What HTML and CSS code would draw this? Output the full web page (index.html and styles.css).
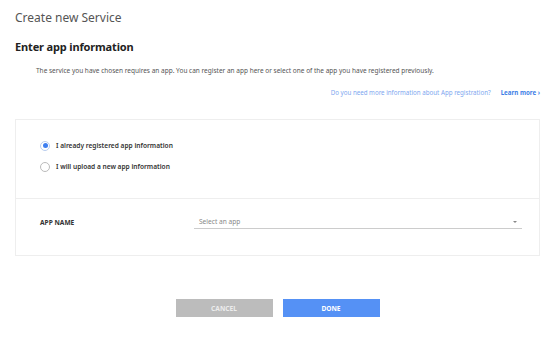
FILE: index.html
```html
<!DOCTYPE html>
<html lang="en">

<head>
    <meta charset="UTF-8">
    <title>Create new Service</title>
    <link rel="stylesheet" href="styles.css">
</head>

<body>
    <div class="page">
        <h1 class="page-title">Create new Service</h1>
        <h2 class="section-title">Enter app information</h2>
        <p class="desc">The service you have chosen requires an app. You can register an app here or select one of the app you have registered previously.</p>
        <div class="help">
            <span class="help-text">Do you need more information about App registration?</span>
            <a class="learn-more" href="#">Learn more &rsaquo;</a>
        </div>

        <div class="card">
            <div class="options">
                <label class="radio checked">
                    <span class="radio-dot"></span>
                    I already registered app information
                </label>
                <label class="radio">
                    <span class="radio-dot"></span>
                    I will upload a new app information
                </label>
            </div>
            <div class="field">
                <div class="field-label">APP NAME</div>
                <div class="select">
                    <span class="select-text">Select an app</span>
                    <span class="select-arrow"></span>
                </div>
            </div>
        </div>

        <div class="actions">
            <button class="btn btn-cancel">CANCEL</button>
            <button class="btn btn-done">DONE</button>
        </div>
    </div>
</body>

</html>
```

FILE: styles.css
```css
* {
    padding: 0;
    margin: 0;
    box-sizing: border-box;
}

body {
    font-family: "Noto Sans", "Open Sans", sans-serif;
    color: #333;
    background: #fff;
}

.page {
    padding: 10px 14px 0 15px;
}

.page-title {
    font-size: 12px;
    font-weight: normal;
    line-height: 16px;
    color: #555;
}

.section-title {
    margin-top: 13px;
    font-size: 11px;
    font-weight: bold;
    line-height: 16px;
    letter-spacing: -0.15px;
    color: #222;
}

.desc {
    margin-top: 11px;
    padding-left: 21px;
    font-size: 6.5px;
    line-height: 10px;
    color: #555;
}

.help {
    margin-top: 12px;
    display: flex;
    justify-content: flex-end;
    align-items: center;
    gap: 10px;
    font-size: 6.2px;
    line-height: 10px;
}

.help-text {
    color: #7ea7ef;
}

.learn-more {
    color: #3d7ee6;
    font-weight: bold;
    text-decoration: none;
}

.card {
    margin-top: 21px;
    height: 137px;
    border: 1px solid #eee;
}

.options {
    height: 79px;
    padding: 20px 0 0 24px;
    border-bottom: 1px solid #eee;
}

.radio {
    display: flex;
    align-items: center;
    gap: 6px;
    height: 11px;
    margin-bottom: 10px;
    font-size: 6.6px;
    font-weight: 600;
    color: #333;
}

.radio-dot {
    width: 10px;
    height: 10px;
    border: 1px solid #bbb;
    border-radius: 50%;
    display: flex;
    align-items: center;
    justify-content: center;
}

.radio.checked .radio-dot {
    border-color: #b9cdee;
}

.radio.checked .radio-dot::after {
    content: "";
    width: 5px;
    height: 5px;
    border-radius: 50%;
    background: #3d7ef0;
}

.field {
    display: flex;
    align-items: center;
    padding: 16px 17px 0 24px;
}

.field-label {
    width: 154px;
    font-size: 6.6px;
    font-weight: bold;
    color: #333;
}

.select {
    flex: 1;
    display: flex;
    justify-content: space-between;
    align-items: center;
    height: 14px;
    padding: 0 5px 0 5px;
    border-bottom: 1px solid #ccc;
}

.select-text {
    font-size: 6.6px;
    color: #888;
}

.select-arrow {
    width: 0;
    height: 0;
    border-left: 2px solid transparent;
    border-right: 2px solid transparent;
    border-top: 2px solid #888;
}

.actions {
    margin-top: 43px;
    display: flex;
    justify-content: center;
    gap: 10px;
}

.btn {
    width: 97px;
    height: 18px;
    border: none;
    font-family: "Noto Sans", "Open Sans", sans-serif;
    font-size: 6.6px;
    font-weight: bold;
    color: #fff;
    cursor: pointer;
}

.btn-cancel {
    background: #bcbcbc;
    color: #ececec;
}

.btn-done {
    background: #5591f5;
}
```
